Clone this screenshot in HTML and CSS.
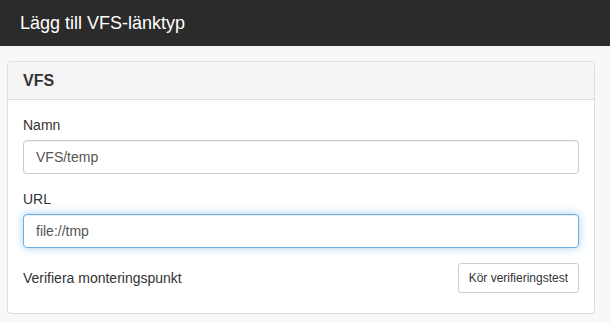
FILE: index.html
```html
<!DOCTYPE html>
<html lang="sv">
<head>
<meta charset="utf-8">
<title>Lägg till VFS-länktyp</title>
<link rel="stylesheet" href="styles.css">
</head>
<body>
<header class="topbar">
  <h1 class="title">Lägg till VFS-länktyp</h1>
</header>
<section class="panel">
  <div class="panel-heading">VFS</div>
  <div class="panel-body">
    <div class="form-group">
      <label class="label" for="namn">Namn</label>
      <input class="input" id="namn" type="text" value="VFS/temp">
    </div>
    <div class="form-group">
      <label class="label" for="url">URL</label>
      <input class="input focused" id="url" type="text" value="file://tmp">
    </div>
    <div class="verify-row">
      <span class="verify-text">Verifiera monteringspunkt</span>
      <button class="btn" type="button">Kör verifieringstest</button>
    </div>
  </div>
</section>
</body>
</html>
```
FILE: styles.css
```css
* { box-sizing: border-box; }
html, body {
  margin: 0;
  padding: 0;
  background: #f8f8f8;
  font-family: "Liberation Sans", Arial, Helvetica, sans-serif;
  font-size: 14px;
  color: #333;
}
.topbar {
  height: 46px;
  background: #2b2b2b;
  display: flex;
  align-items: center;
  padding-left: 20px;
}
.title {
  margin: 0;
  font-size: 18px;
  font-weight: normal;
  color: #fff;
  line-height: 20px;
}
.panel {
  margin: 15px 15px 0 7px;
  background: #fff;
  border: 1px solid #ddd;
  border-radius: 4px;
  box-shadow: 0 1px 1px rgba(0,0,0,0.05);
}
.panel-heading {
  background: #f5f5f5;
  border-bottom: 1px solid #ddd;
  border-radius: 3px 3px 0 0;
  padding: 9px 15px;
  height: 38px;
  font-size: 16px;
  font-weight: bold;
  line-height: 19px;
  color: #333;
}
.panel-body {
  padding: 15px 15px 20px;
}
.form-group {
  margin-bottom: 15px;
  display: flex;
  flex-direction: column;
}
.label {
  line-height: 20px;
  margin-bottom: 5px;
  color: #333;
}
.input {
  height: 34px;
  width: 100%;
  padding: 6px 12px;
  font-family: inherit;
  font-size: 14px;
  line-height: 20px;
  color: #555;
  background: #fff;
  border: 1px solid #ccc;
  border-radius: 4px;
  box-shadow: inset 0 1px 1px rgba(0,0,0,0.075);
  outline: none;
}
.input.focused {
  border-color: #66afe9;
  box-shadow: inset 0 1px 1px rgba(0,0,0,0.075), 0 0 8px rgba(102,175,233,0.6);
}
.verify-row {
  display: flex;
  justify-content: space-between;
  align-items: center;
}
.verify-text {
  line-height: 20px;
}
.btn {
  height: 30px;
  padding: 5px 10px;
  font-family: inherit;
  font-size: 12px;
  line-height: 18px;
  color: #333;
  background: #fff;
  border: 1px solid #ccc;
  border-radius: 3px;
}
```
